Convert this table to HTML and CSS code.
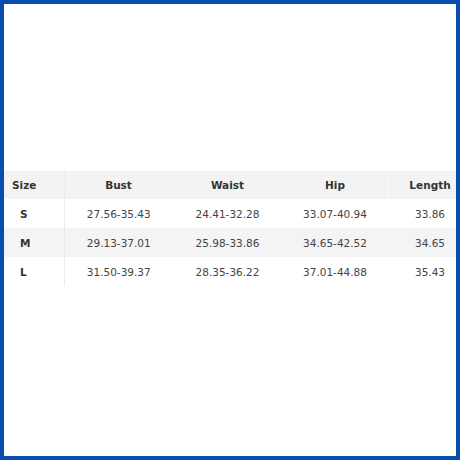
FILE: index.html
```html
<!DOCTYPE html>
<html>
<head>
<meta charset="utf-8">
<link rel="stylesheet" href="styles.css">
</head>
<body>
<div class="frame">
  <div class="wrap">
    <table class="sizes">
      <colgroup>
        <col class="c-size"><col class="c-bust"><col class="c-waist"><col class="c-hip"><col class="c-len">
      </colgroup>
      <thead>
        <tr><th class="size">Size</th><th>Bust</th><th>Waist</th><th>Hip</th><th>Length</th></tr>
      </thead>
      <tbody>
        <tr><td class="size">S</td><td>27.56-35.43</td><td>24.41-32.28</td><td>33.07-40.94</td><td>33.86</td></tr>
        <tr class="alt"><td class="size">M</td><td>29.13-37.01</td><td>25.98-33.86</td><td>34.65-42.52</td><td>34.65</td></tr>
        <tr><td class="size">L</td><td>31.50-39.37</td><td>28.35-36.22</td><td>37.01-44.88</td><td>35.43</td></tr>
      </tbody>
    </table>
  </div>
</div>
</body>
</html>
```
FILE: styles.css
```css
html, body { margin: 0; padding: 0; background: #fff; }
.frame {
  box-sizing: border-box;
  width: 460px;
  height: 460px;
  border: 4px solid #0a4bb0;
  overflow: hidden;
  padding-top: 167px;
}
.wrap { width: 468px; }
.sizes {
  border-collapse: collapse;
  table-layout: fixed;
  width: 468px;
  font-family: "DejaVu Sans", Verdana, sans-serif;
  font-size: 10.5px;
  color: #444;
}
.c-size { width: 60px; }
.c-bust { width: 109px; }
.c-waist { width: 109px; }
.c-hip { width: 106px; }
.c-len { width: 84px; }
.sizes th, .sizes td {
  text-align: center;
  padding: 0;
  white-space: nowrap;
}
.sizes th {
  height: 28px;
  background: #f3f3f3;
  font-weight: bold;
  color: #333;
  border-right: 1px solid #f8f8f8;
}
.sizes td { height: 29px; }
.sizes tr.alt td { background: #f4f4f4; }
.sizes th.size { text-align: left; padding-left: 8px; border-right: 1px solid #ececec; }
.sizes td.size { text-align: left; padding-left: 16px; font-weight: bold; color: #333; border-right: 1px solid #ececec; }
```
